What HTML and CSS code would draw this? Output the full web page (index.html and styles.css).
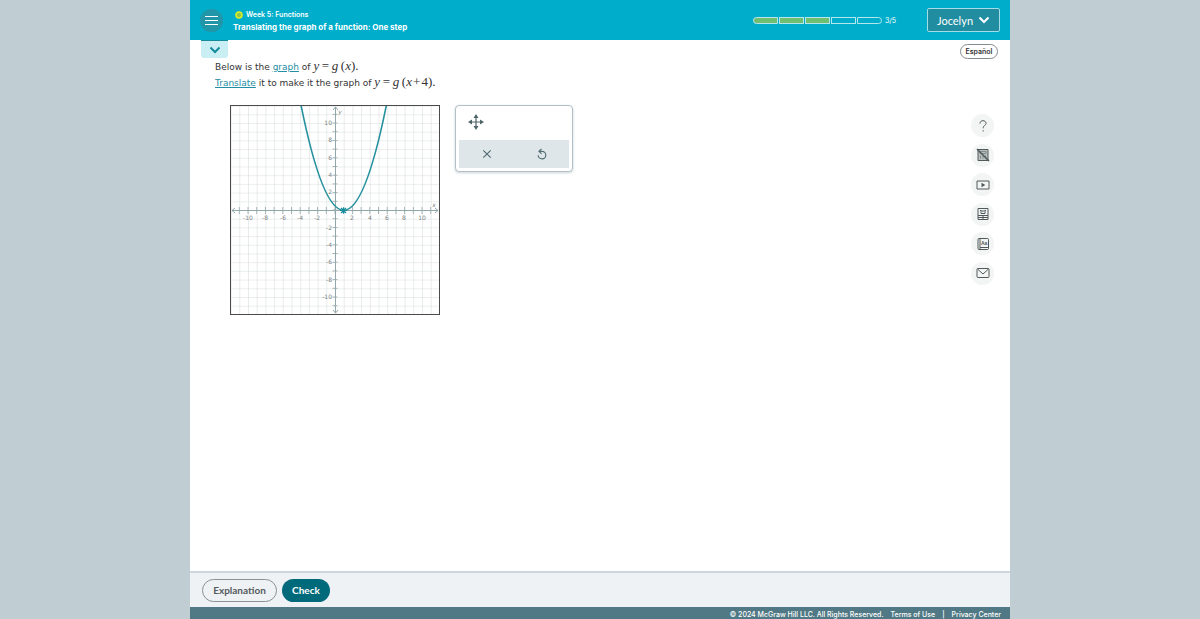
FILE: index.html
```html
<!DOCTYPE html>
<html lang="en">
<head>
<meta charset="utf-8">
<title>Translating the graph of a function: One step</title>
<link rel="stylesheet" href="styles.css">
</head>
<body>
<div class="app">
  <header class="topbar">
    <button class="menu" aria-label="Menu"><span></span><span></span><span></span></button>
    <div class="titles">
      <div class="module"><svg class="dot" viewBox="0 0 8 8" aria-hidden="true"><circle cx="4" cy="4" r="3" fill="#8fc84d" stroke="#dcec27" stroke-width="1.600"/></svg>Week 5: Functions</div>
      <h1>Translating the graph of a function: One step</h1>
    </div>
    <div class="progress">
      <div class="segments"><i class="done"></i><i class="done"></i><i class="done"></i><i></i><i></i></div>
      <span>3/5</span>
    </div>
    <button class="user">Jocelyn <svg viewBox="0 0 12 8" aria-hidden="true"><path d="M1.500 1.500 6 6l4.500-4.500"/></svg></button>
  </header>
  <div class="content">
    <main class="problem">
      <button class="collapse" aria-label="Expand header"><svg viewBox="0 0 12 8" aria-hidden="true"><path d="M1.500 1.500 6 6l4.500-4.500"/></svg></button>
      <div class="prompt">
        <p>Below is the <a href="#graph">graph</a> of <span class="math"><i>y</i>&#8201;=&#8201;<i>g</i>&#8201;(<i>x</i>).</span></p>
        <p><a href="#translate">Translate</a> it to make it the graph of <span class="math"><i>y</i>&#8201;=&#8201;<i>g</i>&#8201;(<i>x</i>&#8202;+&#8202;4).</span></p>
      </div>
      <div class="workspace">
        <svg class="graph" id="graph" viewBox="0 0 210 210" role="img" aria-label="Parabola with vertex at (1, 0)">
          <defs>
            <pattern id="grid" x="105" y="105" width="8.7" height="8.7" patternUnits="userSpaceOnUse"><path d="M0 0H8.700M0 0V8.700" stroke="#d8dddd" stroke-width="1.100"/></pattern>
            <pattern id="tickx" x="100.650" y="0" width="8.7" height="210" patternUnits="userSpaceOnUse"><path d="M4.350 102V109" stroke="#8fa3a8" stroke-width=".8"/></pattern>
            <pattern id="ticky" x="0" y="100.650" width="210" height="8.7" patternUnits="userSpaceOnUse"><path d="M102.500 4.350H107.500" stroke="#8fa3a8" stroke-width=".8"/></pattern>
          </defs>
          <rect width="210" height="210" fill="#fff"/>
          <rect width="210" height="210" fill="url(#grid)"/>
          <rect width="210" height="210" fill="url(#tickx)"/>
          <rect width="210" height="210" fill="url(#ticky)"/>
          <path class="axis" d="M2 105.500H208M105.500 2V208M5 103l-3 2.500 3 2.500M205 103l3 2.500-3 2.500M103 5l2.500-3 2.500 3M103 205l2.500 3 2.500-3"/>
          <g class="labels middle">
            <text x="18" y="115">-10</text><text x="35" y="115">-8</text><text x="53" y="115">-6</text><text x="70" y="115">-4</text><text x="87" y="115">-2</text>
            <text x="122" y="115">2</text><text x="140" y="115">4</text><text x="157" y="115">6</text><text x="174" y="115">8</text><text x="192" y="115">10</text>
            <text class="name" x="204" y="102">x</text><text class="name" x="110" y="9">y</text>
          </g>
          <g class="labels end">
            <text x="102" y="20">10</text><text x="102" y="37">8</text><text x="102" y="55">6</text><text x="102" y="72">4</text><text x="102" y="89">2</text>
            <text x="102" y="125">-2</text><text x="102" y="142">-4</text><text x="102" y="159">-6</text><text x="102" y="177">-8</text><text x="102" y="194">-10</text>
          </g>
          <path class="curve" d="M71.100 0.600Q113.700 210 156.300 0.600"/>
          <path class="vertex" d="M111 103l5 5M116 103l-5 5M113.500 102.500v6M110 105.500h7"/>
          <rect x=".5" y=".5" width="209" height="209" fill="none" stroke="#4a4a4a"/>
        </svg>
        <div class="palette">
          <button class="move" aria-label="Translate graph"><svg viewBox="0 0 16 16" aria-hidden="true"><path d="M8 2V14M2 8H14" stroke="#4d6468" stroke-width="1.200"/><path d="M8 0l2.500 4h-5zM8 16l2.500-4h-5zM0 8l4-2.500v5zM16 8l-4-2.500v5z" fill="#4d6468"/></svg></button>
          <div class="tools">
            <button aria-label="Clear"><svg viewBox="0 0 12 12" aria-hidden="true"><path d="M2.300 2.300l7.400 7.400M9.700 2.300l-7.400 7.400"/></svg></button>
            <button aria-label="Undo"><svg viewBox="0 0 12 12" aria-hidden="true"><path d="M5.500 .8 3 3.300 5.500 5.800M3.200 3.300H6A3.800 3.800 0 1 1 2.200 7.300"/></svg></button>
          </div>
        </div>
      </div>
    </main>
    <aside class="side">
      <button class="language">Español</button>
      <nav class="helpers" aria-label="Resources">
        <button aria-label="Help"><svg viewBox="0 0 14 14"><path d="M4 4.600C4 2.700 5.300 1.700 7 1.700s3 1 3 2.700c0 2-2.800 2.100-2.800 4.400v.5M7.200 11.200v1.300"/></svg></button>
        <button aria-label="Calculator unavailable"><svg viewBox="0 0 14 14"><path fill="#b9bebe" d="M2 1.500h10v11H2z"/><path d="M4 3.500h6v2H4zM4.500 7.500v3M7 7.500v3M9.500 7.500v3" stroke="#858c8c"/><path d="M1 1l12 12" stroke-width="1.500"/></svg></button>
        <button aria-label="Video"><svg viewBox="0 0 14 14"><path d="M1 3h12v8H1z"/><path d="M5.500 4.700v4.600L9.300 7z" fill="#505a5a" stroke="none"/></svg></button>
        <button aria-label="Textbook"><svg viewBox="0 0 14 14"><path d="M2 1.500h10v11H2zM2 8.500h10M7 8.500v4M2 10.500h10M5 3.500v3h4v-3M7 3v2M4 3.500h1.500M8.500 3.500H10"/></svg></button>
        <button aria-label="Dictionary"><svg viewBox="0 0 14 14"><rect x="2" y="1.500" width="10.500" height="11" rx="1"/><path d="M4 1.500v11M4 10.500h8"/><text x="5" y="8">Aa</text></svg></button>
        <button aria-label="Message"><svg viewBox="0 0 14 14"><rect x="1" y="2.500" width="12" height="9" rx="1"/><path d="M1.500 3 7 8l5.500-5"/></svg></button>
      </nav>
    </aside>
  </div>
  <div class="actions">
    <button class="explain">Explanation</button>
    <button class="check">Check</button>
  </div>
  <footer class="footer"><span>© 2024 McGraw Hill LLC. All Rights Reserved.</span><a href="#terms">Terms of Use</a><span>|</span><a href="#privacy">Privacy Center</a></footer>
</div>
</body>
</html>
```
FILE: styles.css
```css
* { box-sizing: border-box; }
body { margin: 0; background: #c0cdd3; font-family: Lato, sans-serif; color: #333; }
button { font: inherit; color: inherit; border: 0; padding: 0; background: none; cursor: pointer; }
svg { display: block; fill: none; }
p, h1 { margin: 0; }
.app { max-width: 820px; height: 100vh; margin: 0 auto; display: flex; flex-direction: column; background: #fff; overflow: hidden; }

.topbar { flex: none; display: flex; align-items: center; height: 40px; padding: 0 10px; background: #00adcb; color: #fff; font-family: Inter, sans-serif; }
.menu { display: flex; flex-direction: column; align-items: center; justify-content: center; gap: 3px; width: 23px; height: 23px; border-radius: 50%; background: #2196a9; }
.menu span { width: 13px; height: 1px; background: #fff; }
.titles { flex: 1; margin-left: 10px; padding-top: 2px; font-weight: 600; }
.module { display: flex; align-items: center; gap: 3px; font-size: 7px; line-height: 12px; }
.dot { width: 8px; height: 8px; margin-left: 2px; }
h1 { font-size: 8px; line-height: 13px; font-weight: 700; }
.progress { display: flex; align-items: center; gap: 3px; margin-right: 31px; font-size: 7px; }
.segments { display: flex; gap: 1px; }
.segments i { width: 25px; height: 7px; border: 1px solid #b5e6ee; }
.segments i.done { background: #70bf70; }
.segments i:first-child { border-radius: 4px 0 0 4px; }
.segments i:last-child { border-radius: 0 4px 4px 0; }
.user { display: flex; align-items: center; justify-content: center; gap: 5px; width: 73px; height: 24px; border: 1px solid #a5dde6; border-radius: 2px; background: #208da0; font: 11px Lato, sans-serif; color: #fff; }
.user svg { width: 12px; height: 8px; stroke: #fff; stroke-width: 2; }

.content { flex: 1; min-height: 0; display: flex; justify-content: space-between; }
.collapse { display: grid; place-items: center; width: 27px; height: 18px; margin-left: 11px; border-top: 1px solid #168b9a; border-radius: 0 0 3px 3px; background: #c9eff5; }
.collapse svg { width: 12px; height: 8px; stroke: #168b9a; stroke-width: 2; }
.prompt { margin: 1px 0 0 25px; font: 9px/16px "DejaVu Sans", sans-serif; }
.prompt a { color: #258da5; }
.math { font: 13px/1 "Liberation Serif", serif; }
.workspace { display: flex; gap: 15px; margin: 14px 0 0 40px; }
.graph { flex: none; width: 210px; height: 210px; }
.axis { stroke: #93a7ab; stroke-width: 1; }
.labels { font: 6px "DejaVu Sans", sans-serif; fill: #7c8285; }
.middle { text-anchor: middle; }
.end { text-anchor: end; }
.name { font-style: italic; }
.curve { stroke: #25919f; stroke-width: 1.6; }
.vertex { stroke: #168b9a; stroke-width: 1.2; }
.palette { align-self: flex-start; width: 118px; padding: 3px; border: 1px solid #b3c0c6; border-radius: 4px; background: #fff; box-shadow: 0 1px 3px #ccd5d9; }
.move { display: grid; place-items: center; width: 34px; height: 31px; padding-bottom: 5px; }
.move svg { width: 16px; height: 16px; }
.tools { display: grid; grid-template-columns: 1fr 1fr; height: 28px; background: #dfe6e9; }
.tools button { display: grid; place-items: center; }
.tools svg { width: 12px; height: 12px; stroke: #526d74; stroke-width: 1.2; }

.side { display: flex; flex-direction: column; align-items: flex-end; padding: 4px 12px 0 0; }
.language { width: 38px; height: 15px; border: 1px solid #848b8e; border-radius: 8px; font: 600 7px Inter, sans-serif; }
.helpers { display: flex; flex-direction: column; justify-content: space-between; height: 171px; margin: 55px 4px 0 0; }
.helpers button { display: grid; place-items: center; width: 23px; height: 23px; border-radius: 50%; background: #f3f4f4; }
.helpers svg { width: 14px; height: 14px; stroke: #505a5a; }
.helpers text { font: 700 5px "Liberation Sans", sans-serif; fill: #505a5a; stroke: none; }

.actions { flex: none; display: flex; align-items: center; gap: 5px; height: 36px; padding: 0 12px; border-top: 2px solid #ccd6dc; background: #eef2f4; font-size: 10px; font-weight: 700; }
.explain, .check { height: 23px; border-radius: 12px; }
.explain { width: 75px; border: 1px solid #8b9193; color: #555b5e; }
.check { width: 48px; background: #00697a; color: #fff; }
.footer { flex: none; display: flex; justify-content: flex-end; gap: 7px; height: 12px; padding: 2px 9px 0; background: #517985; color: #fff; font: 500 7px/11px Inter, sans-serif; }
.footer a { color: inherit; text-decoration: none; }
```
